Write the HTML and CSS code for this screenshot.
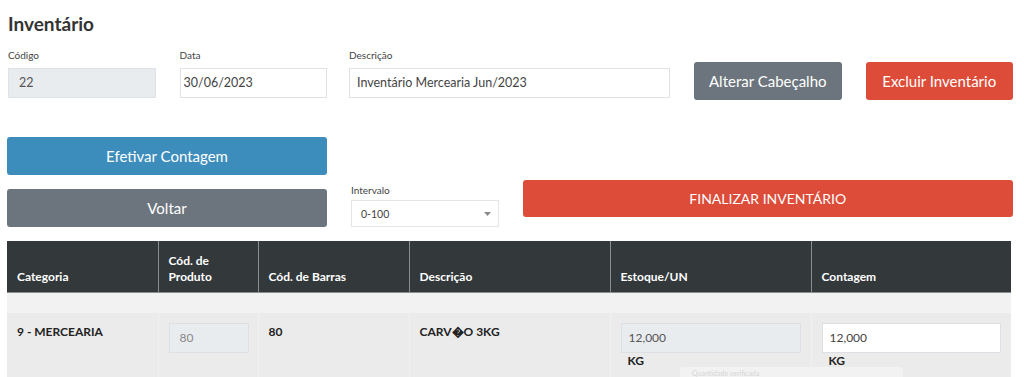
FILE: index.html
```html
<!DOCTYPE html>
<html lang="pt-BR">
<head>
<meta charset="utf-8">
<title>Inventário</title>
<link rel="stylesheet" href="styles.css">
</head>
<body>
<div class="page">
  <h1 class="title">Inventário</h1>

  <div class="grid head-row">
    <div class="field">
      <label class="lbl">Código</label>
      <div class="inp inp-ro inp-codigo">22</div>
    </div>
    <div class="field">
      <label class="lbl">Data</label>
      <div class="inp inp-data">30/06/2023</div>
    </div>
    <div class="field span2 desc-field">
      <label class="lbl">Descrição</label>
      <div class="inp inp-desc">Inventário Mercearia Jun/2023</div>
    </div>
    <div class="btn-cell">
      <button class="btn btn-gray">Alterar Cabeçalho</button>
    </div>
    <div class="btn-cell">
      <button class="btn btn-red">Excluir Inventário</button>
    </div>
  </div>

  <div class="grid action-row">
    <div class="stack span2">
      <button class="btn btn-blue">Efetivar Contagem</button>
      <button class="btn btn-gray">Voltar</button>
    </div>
    <div class="field interval">
      <label class="lbl">Intervalo</label>
      <div class="select">
        <span>0-100</span>
        <svg class="caret" width="7" height="4" viewBox="0 0 7 4"><path d="M0 0h7L3.5 4z" fill="#8a8a8a"/></svg>
      </div>
    </div>
    <div class="span3 finalize">
      <button class="btn btn-red btn-final">FINALIZAR INVENTÁRIO</button>
    </div>
  </div>

  <table class="tbl">
    <colgroup>
      <col class="c1"><col class="c2"><col class="c3"><col class="c4"><col class="c5"><col class="c6">
    </colgroup>
    <thead>
      <tr>
        <th>Categoria</th>
        <th>Cód. de<br>Produto</th>
        <th>Cód. de Barras</th>
        <th>Descrição</th>
        <th>Estoque/UN</th>
        <th>Contagem</th>
      </tr>
    </thead>
    <tbody>
      <tr class="spacer"><td colspan="6"></td></tr>
      <tr class="item">
        <td>9 - MERCEARIA</td>
        <td><div class="cell-inp ro small">80</div></td>
        <td>80</td>
        <td>CARV&#xFFFD;O 3KG</td>
        <td><div class="cell-inp ro">12,000</div><div class="unit">KG</div></td>
        <td><div class="cell-inp">12,000</div><div class="unit">KG</div></td>
      </tr>
    </tbody>
  </table>
</div>
<div class="toast"><span class="toast-text">Quantidade verificada</span></div>
</body>
</html>
```
FILE: styles.css
```css
html { overflow: hidden; }
body {
  margin: 0;
  font-family: "Lato", "Liberation Sans", sans-serif;
  color: #333;
  background: #fff;
}
.page { padding: 0 11px 0 8px; }
.title {
  margin: 10px 0 0;
  font-size: 19px;
  line-height: 28px;
  font-weight: 700;
  color: #333;
}
.grid {
  display: grid;
  grid-template-columns: repeat(6, 147.5px);
  column-gap: 24px;
}
.span2 { grid-column: span 2; }
.span3 { grid-column: span 3; }
.head-row { margin-top: 10px; }
.field { display: flex; flex-direction: column; }
.desc-field { margin-left: -2px; }
.lbl {
  font-size: 10px;
  line-height: 14px;
  color: #444;
  margin-bottom: 6px;
}
.inp {
  height: 30px;
  box-sizing: border-box;
  border: 1px solid #dfe2e6;
  font-size: 12.5px;
  line-height: 28px;
  color: #444;
  background: #fff;
}
.inp-ro { background: #e9ecef; color: #555; }
.inp-codigo { padding-left: 10px; }
.inp-data { padding-left: 3px; }
.inp-desc { padding-left: 7px; }
.btn-cell { padding-top: 14px; }
.btn {
  display: block;
  width: 100%;
  height: 38px;
  border: 0;
  border-radius: 3px;
  font-family: inherit;
  font-size: 15px;
  color: #fff;
  padding: 0;
}
.btn-gray { background: #6c757d; }
.btn-red { background: #dd4b39; }
.btn-blue { background: #3c8dbc; }
.action-row { margin-top: 37px; }
.stack { display: flex; flex-direction: column; gap: 14px; margin-left: -1px; }
.interval { align-self: end; }
.interval .lbl { margin-bottom: 3px; }
.select {
  height: 27px;
  box-sizing: border-box;
  border: 1px solid #e3e5e8;
  display: flex;
  align-items: center;
  justify-content: space-between;
  padding: 0 7px 0 9px;
  font-size: 10.5px;
  color: #444;
}
.finalize { padding-top: 43px; }
.btn-final { height: 37px; font-size: 14px; }

.tbl {
  margin-top: 14px;
  margin-left: -1px;
  width: 1004px;
  border-collapse: collapse;
  table-layout: fixed;
}
.c1 { width: 151px; } .c2 { width: 100px; } .c3 { width: 151px; }
.c4 { width: 201px; } .c5 { width: 201px; } .c6 { width: 200px; }
.tbl th {
  background: #33383b;
  color: #fff;
  font-size: 12px;
  font-weight: 700;
  line-height: 16px;
  text-align: left;
  vertical-align: bottom;
  padding: 0 10px 7px;
  height: 51px;
  box-sizing: border-box;
  border-left: 1px solid #8a8d8f;
  border-bottom: 1px solid #8a8d8f;
}
.tbl th:first-child { border-left: 0; }
.spacer td { height: 20px; background: #f2f2f2; padding: 0; }
.item td {
  background: #ebebeb;
  vertical-align: top;
  padding: 10px 10px 24px;
  font-size: 12px;
  font-weight: 700;
  line-height: 18px;
  color: #222;
  border-left: 1px solid #f1f1f1;
}
.item td:first-child { border-left: 0; }
.cell-inp {
  height: 30px;
  box-sizing: border-box;
  border: 1px solid #dcdfe3;
  background: #fff;
  font-size: 12px;
  font-weight: 400;
  line-height: 28px;
  padding-left: 7px;
  color: #444;
}
.cell-inp.ro { background: #e9ecef; color: #555; }
.cell-inp.small { width: 80px; padding-left: 10px; color: #888; }
.unit { padding-left: 7px; font-size: 12px; line-height: 16px; }
.toast {
  position: absolute;
  left: 680px;
  top: 367px;
  width: 223px;
  height: 10px;
  background: #f2f2f2;
  border-radius: 3px 3px 0 0;
  padding: 2px 12px 0;
  box-sizing: border-box;
  overflow: hidden;
}
.toast-text {
  display: block;
  color: #d6d6d6;
  font-size: 7px;
  line-height: 8px;
  white-space: nowrap;
}
```
